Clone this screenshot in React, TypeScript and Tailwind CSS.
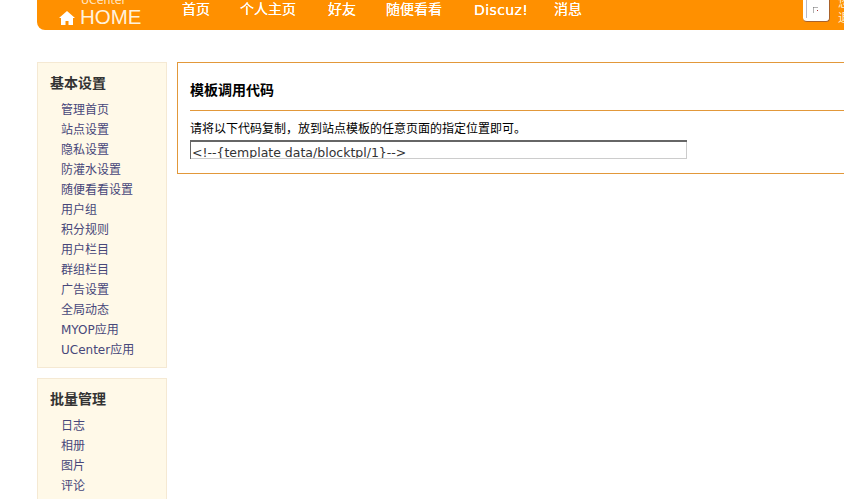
const font = { fontFamily: '"DejaVu Sans", "Noto Sans CJK SC", sans-serif' };

const nav = [
  { label: "首页", w: "w-[58px]", x: "" },
  { label: "个人主页", w: "w-[88px]", x: "" },
  { label: "好友", w: "w-[58px]", x: "" },
  { label: "随便看看", w: "w-[88px]", x: "" },
  { label: "Discuz!", w: "w-[80px]", x: "text-[14px] mt-[1px] tracking-[0.4px]" },
  { label: "消息", w: "w-[58px]", x: "" },
];

const basic = ["管理首页", "站点设置", "隐私设置", "防灌水设置", "随便看看设置", "用户组", "积分规则", "用户栏目", "群组栏目", "广告设置", "全局动态", "MYOP应用", "UCenter应用"];
const batch = ["日志", "相册", "图片", "评论"];

function Block({ title, items, cls }: { title: string; items: string[]; cls: string }) {
  return (
    <div className={`border border-[#f5e9d3] bg-[#fff9e8] pl-3 ${cls}`}>
      <h2 className="text-[14px] leading-[20px] font-bold text-[#333] mt-[10px] mb-[7px]">{title}</h2>
      <ul className="pl-[11px]">
        {items.map((t) => (
          <li key={t} className="h-[20px] text-[12px] leading-[20px] text-[#47477a] whitespace-nowrap">{t}</li>
        ))}
      </ul>
    </div>
  );
}

export default function App() {
  return (
    <div className="w-[844px] h-[499px] overflow-hidden bg-white" style={font}>
      <header className="ml-[37px] w-[807px] h-[30px] bg-[#ff9000] rounded-bl-[8px] flex overflow-hidden text-white">
        <div className="w-[145px] shrink-0 flex items-end pl-[22px] pb-[2px] relative">
          <span className="absolute left-[44px] top-[-6px] text-[11px] leading-[13px] text-[#ffe9c8]">UCenter</span>
          <svg viewBox="0 0 16 14" className="w-[16px] h-[14px] mb-[3px] mr-[5px] fill-[#fff]">
            <path d="M8 0 L16 7 L14 7 L14 14 L9.5 14 L9.5 10 L6.5 10 L6.5 14 L2 14 L2 7 L0 7 Z" />
          </svg>
          <span className="text-[20.5px] leading-[22px] text-[#fff2dd]" style={{ fontFamily: '"Liberation Sans", sans-serif' }}>HOME</span>
        </div>
        <nav className="flex w-[621px] shrink-0 -mt-[1px]">
          {nav.map((n) => (
            <span key={n.label} className={`${n.w} ${n.x || "text-[14px]"} leading-[20px] [text-shadow:0_0_0.6px_#fff] whitespace-nowrap`}>{n.label}</span>
          ))}
        </nav>
        <div className="w-[27px] h-[22px] bg-white rounded-b-[4px] border-r border-b border-[#a9622a] shrink-0 flex justify-center relative">
          <div className="w-[20px] h-[18px] border-l border-[#b9b9c8] relative">
            <svg viewBox="0 0 6 6" className="absolute left-[6px] top-[7px] w-[6px] h-[6px]">
              <path d="M0 6V0H5" stroke="#666" fill="none" />
              <rect x="4" y="3" width="1" height="1" fill="#a33" />
            </svg>
          </div>
        </div>
        <div className="ml-[8px] text-[12px] leading-[15px] text-[#ffeeca] whitespace-nowrap -mt-[4px]">
          <div>您</div>
          <div>退</div>
        </div>
      </header>

      <div className="flex gap-[10px] ml-[37px] mt-[32px]">
        <aside className="w-[130px] shrink-0 flex flex-col gap-[10px]">
          <Block title="基本设置" items={basic} cls="h-[306px]" />
          <Block title="批量管理" items={batch} cls="h-[140px]" />
        </aside>
        <main className="w-[680px] shrink-0 h-[112px] border border-[#e2983a] pl-3 pt-[17px]">
          <h1 className="text-[14px] leading-[20px] font-bold text-black">模板调用代码</h1>
          <div className="border-t border-[#e2983a] mt-[10px] pt-[10px]">
            <p className="text-[12px] leading-[16px] text-black whitespace-nowrap">请将以下代码复制，放到站点模板的任意页面的指定位置即可。</p>
            <div className="mt-[3px] w-[497px] h-[19px] border-t-2 border-l border-[#666] overflow-hidden relative">
              <div className="absolute inset-0 border-r border-b border-[#ccc]"></div>
              <span className="block pl-[1px] text-[12.5px] leading-[21px] text-[#333] whitespace-nowrap">{"<!--{template data/blocktpl/1}-->"}</span>
            </div>
          </div>
        </main>
      </div>
    </div>
  );
}
